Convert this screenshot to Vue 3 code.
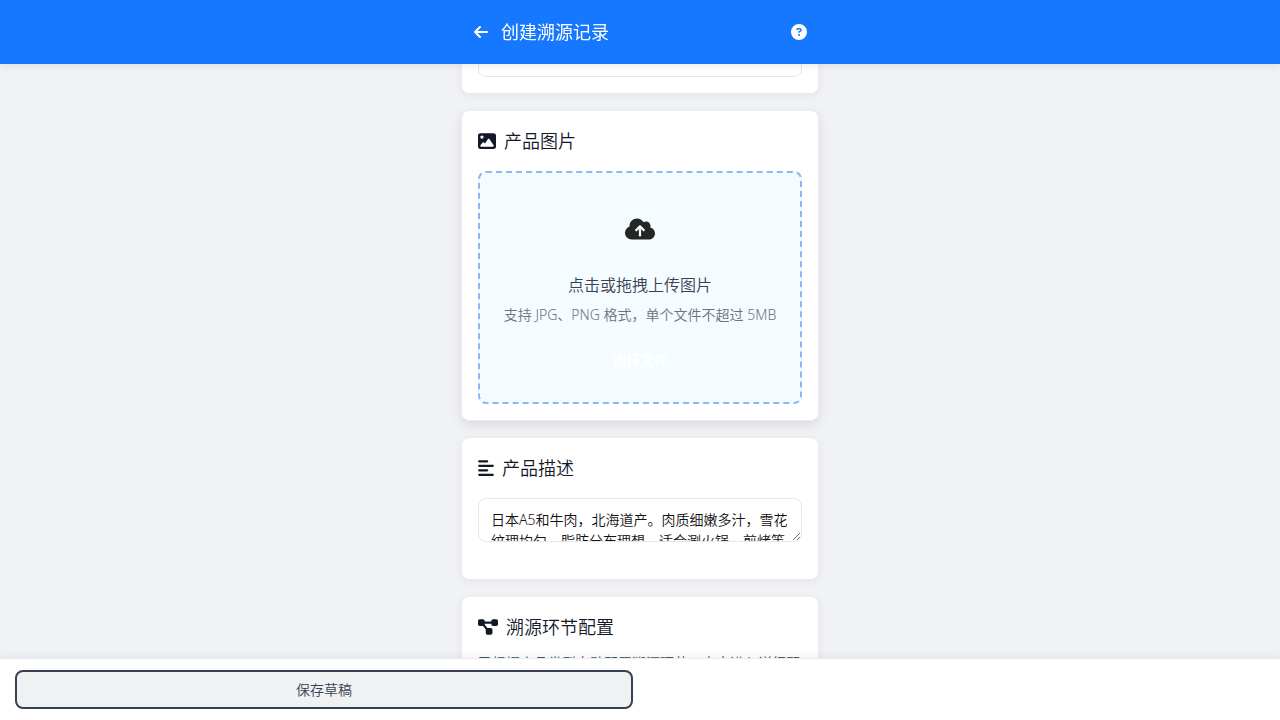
<script setup>
import { ref } from 'vue'

const batch = ref('')
const description = ref('日本A5和牛肉，北海道产。肉质细嫩多汁，雪花纹理均匀，脂肪分布理想，适合涮火锅、煎烤等多种烹饪方式。')
</script>

<template>
  <div class="page">
    <header class="topbar">
      <div class="topbar-inner">
        <button class="icon-btn" type="button" aria-label="返回">
          <svg class="arrow" viewBox="0 0 448 512"><path d="M9.4 233.4c-12.5 12.5-12.5 32.8 0 45.3l160 160c12.5 12.5 32.8 12.5 45.3 0s12.5-32.8 0-45.3L109.2 288 416 288c17.7 0 32-14.3 32-32s-14.3-32-32-32l-306.7 0L214.6 118.6c12.5-12.5 12.5-32.8 0-45.3s-32.8-12.5-45.3 0l-160 160z" /></svg>
        </button>
        <h1>创建溯源记录</h1>
        <button class="icon-btn" type="button" aria-label="帮助">
          <svg class="help" viewBox="0 0 512 512"><path d="M256 512A256 256 0 1 0 256 0a256 256 0 1 0 0 512zM169.8 165.3c7.9-22.3 29.1-37.3 52.8-37.3h58.3c34.9 0 63.1 28.3 63.1 63.1c0 22.6-12.1 43.5-31.7 54.8L280 264.4c-.2 13-10.9 23.6-24 23.6c-13.3 0-24-10.7-24-24V250.5c0-8.6 4.6-16.5 12.1-20.8l44.3-25.4c4.7-2.7 7.6-7.7 7.6-13.1c0-8.4-6.8-15.1-15.1-15.1H222.6c-3.4 0-6.4 2.1-7.5 5.3l-.4 1.2c-4.4 12.5-18.2 19-30.6 14.6s-19-18.2-14.6-30.6l.4-1.2zM224 352a32 32 0 1 1 64 0 32 32 0 1 1 -64 0z" /></svg>
        </button>
      </div>
    </header>

    <main class="content">
      <section class="card">
        <input v-model="batch" class="field" type="text" aria-label="批次" />
      </section>

      <section class="card raised">
        <h2>
          <svg class="w18" viewBox="0 0 512 512"><path d="M0 96C0 60.7 28.7 32 64 32H448c35.3 0 64 28.7 64 64V416c0 35.3-28.7 64-64 64H64c-35.3 0-64-28.7-64-64V96zM323.8 202.5c-4.5-6.6-11.9-10.5-19.8-10.5s-15.4 3.9-19.8 10.5l-87 127.6L170.7 297c-4.6-5.7-11.5-9-18.7-9s-14.2 3.3-18.7 9l-64 80c-5.8 7.2-6.9 17.1-2.9 25.4s12.4 13.6 21.6 13.6h96 32H424c8.9 0 17.1-4.9 21.2-12.8s3.6-17.4-1.4-24.7l-120-176zM112 192a48 48 0 1 0 0-96 48 48 0 1 0 0 96z" /></svg>
          产品图片
        </h2>
        <div class="upload">
          <svg class="cloud" viewBox="0 0 640 512"><path d="M144 480C64.5 480 0 415.5 0 336c0-62.8 40.2-116.2 96.2-135.9c-.1-2.7-.2-5.4-.2-8.1c0-88.4 71.6-160 160-160c59.3 0 111 32.2 138.7 80.2C409.9 102 428.3 96 448 96c53 0 96 43 96 96c0 12.2-2.3 23.8-6.4 34.6C596 238.4 640 290.1 640 352c0 70.7-57.3 128-128 128H144zm79-217c-9.4 9.4-9.4 24.6 0 33.9s24.6 9.4 33.9 0l39-39V392c0 13.3 10.7 24 24 24s24-10.7 24-24V257.9l39 39c9.4 9.4 24.6 9.4 33.9 0s9.4-24.6 0-33.9l-80-80c-9.4-9.4-24.6-9.4-33.9 0l-80 80z" /></svg>
          <p class="upload-title">点击或拖拽上传图片</p>
          <p class="upload-hint">支持 JPG、PNG 格式，单个文件不超过 5MB</p>
          <button class="pick" type="button">选择文件</button>
        </div>
      </section>

      <section class="card">
        <h2>
          <svg class="w16" viewBox="0 0 448 512"><path d="M288 64c0 17.7-14.3 32-32 32H32C14.3 96 0 81.7 0 64S14.3 32 32 32H256c17.7 0 32 14.3 32 32zm0 256c0 17.7-14.3 32-32 32H32c-17.7 0-32-14.3-32-32s14.3-32 32-32H256c17.7 0 32 14.3 32 32zM0 192c0-17.7 14.3-32 32-32H416c17.7 0 32 14.3 32 32s-14.3 32-32 32H32c-17.7 0-32-14.3-32-32zM448 448c0 17.7-14.3 32-32 32H32c-17.7 0-32-14.3-32-32s14.3-32 32-32H416c17.7 0 32 14.3 32 32z" /></svg>
          产品描述
        </h2>
        <textarea v-model="description" class="field area" aria-label="产品描述"></textarea>
      </section>

      <section class="card">
        <h2 class="tight">
          <svg class="w20" viewBox="0 0 576 512"><path d="M0 80C0 53.5 21.5 32 48 32h96c26.5 0 48 21.5 48 48V96H384V80c0-26.5 21.5-48 48-48h96c26.5 0 48 21.5 48 48v96c0 26.5-21.5 48-48 48H432c-26.5 0-48-21.5-48-48V160H192v16c0 1.7-.1 3.4-.3 5L272 288h96c26.5 0 48 21.5 48 48v96c0 26.5-21.5 48-48 48H272c-26.5 0-48-21.5-48-48V336c0-1.7 .1-3.4 .3-5L144 224H48c-26.5 0-48-21.5-48-48V80z" /></svg>
          溯源环节配置
        </h2>
        <p class="note">已根据产品类型自动配置溯源环节，点击进入详细配置</p>
      </section>
    </main>

    <footer class="actions">
      <button class="draft" type="button">保存草稿</button>
    </footer>
  </div>
</template>

<style>
body {
  margin: 0;
  background: #f0f2f5;
}
</style>

<style scoped>
.page,
.page * {
  box-sizing: border-box;
}

.page {
  height: 100vh;
  overflow: hidden;
  background: #f0f2f5;
  color: #111827;
  font-family: "Noto Sans", "Noto Sans CJK SC", sans-serif;
  font-weight: 350;
}

button,
input,
textarea {
  font: inherit;
  margin: 0;
}

h1,
h2,
p {
  margin: 0;
}

svg {
  display: block;
  fill: currentColor;
  flex: none;
}

.topbar {
  position: fixed;
  inset: 0 0 auto;
  z-index: 2;
  height: 64px;
  background: #1677ff;
  color: #fff;
  box-shadow: 0 2px 8px rgba(0, 0, 0, 0.08);
}

.topbar-inner {
  display: flex;
  align-items: center;
  max-width: 390px;
  height: 100%;
  margin: 0 auto;
  padding: 0 20px;
}

.icon-btn {
  display: grid;
  place-items: center;
  width: 32px;
  height: 32px;
  padding: 0;
  border: 0;
  background: none;
  color: inherit;
}

.arrow {
  width: 14px;
  height: 16px;
}

.help {
  width: 16px;
  height: 16px;
}

h1 {
  flex: 1;
  padding-left: 4px;
  font-size: 18px;
  line-height: 28px;
  font-weight: 400;
}

.content {
  display: flex;
  flex-direction: column;
  gap: 16px;
  max-width: 390px;
  margin: 0 auto;
  padding: 16px;
}

.card {
  padding: 16px;
  border: 1px solid #ebecef;
  border-radius: 8px;
  background: #fff;
  box-shadow: 0 2px 8px rgba(0, 0, 0, 0.06);
}

.raised {
  box-shadow: 0 4px 12px rgba(0, 0, 0, 0.1);
}

h2 {
  display: flex;
  align-items: center;
  gap: 8px;
  margin-bottom: 16px;
  font-size: 18px;
  line-height: 28px;
  font-weight: 350;
}

.tight {
  margin-bottom: 11px;
}

.w18 {
  width: 18px;
  height: 18px;
}

.w16 {
  width: 16px;
  height: 18px;
}

.w20 {
  width: 20px;
  height: 18px;
}

.field {
  display: block;
  width: 100%;
  height: 44px;
  padding: 10px 12px;
  border: 1px solid #e5e7eb;
  border-radius: 8px;
  background: #fff;
  color: #111;
  font-size: 14px;
  line-height: 21px;
}

.area {
  margin-bottom: 21px;
  overflow: hidden;
  resize: vertical;
}

.upload {
  display: flex;
  flex-direction: column;
  align-items: center;
  padding: 44px 16px 23px;
  border: 2px dashed #8bb6f8;
  border-radius: 8px;
  background: #f4fcff;
  text-align: center;
}

.cloud {
  width: 30px;
  height: 24px;
  margin-bottom: 32px;
  color: #262626;
}

.upload-title {
  margin-bottom: 7px;
  color: #374151;
  font-size: 16px;
  line-height: 24px;
}

.upload-hint {
  margin-bottom: 16px;
  color: #6b7280;
  font-size: 14px;
  line-height: 21px;
}

.pick {
  padding: 8px 16px;
  border: 0;
  background: none;
  color: #fff;
  font-size: 14px;
  line-height: 22px;
  font-weight: 600;
}

.note {
  color: #4b5563;
  font-size: 14px;
  line-height: 21px;
}

.actions {
  position: fixed;
  inset: auto 0 0;
  z-index: 2;
  display: grid;
  grid-template-columns: 1fr 1fr;
  gap: 14px;
  padding: 11px 15px;
  border-top: 1px solid #ebecef;
  background: #fff;
  box-shadow: 0 -2px 8px rgba(0, 0, 0, 0.06);
}

.draft {
  padding: 7px 16px;
  border: 2px solid #374151;
  border-radius: 8px;
  background: #f0f1f3;
  color: #374151;
  font-size: 14px;
  line-height: 21px;
}
</style>
